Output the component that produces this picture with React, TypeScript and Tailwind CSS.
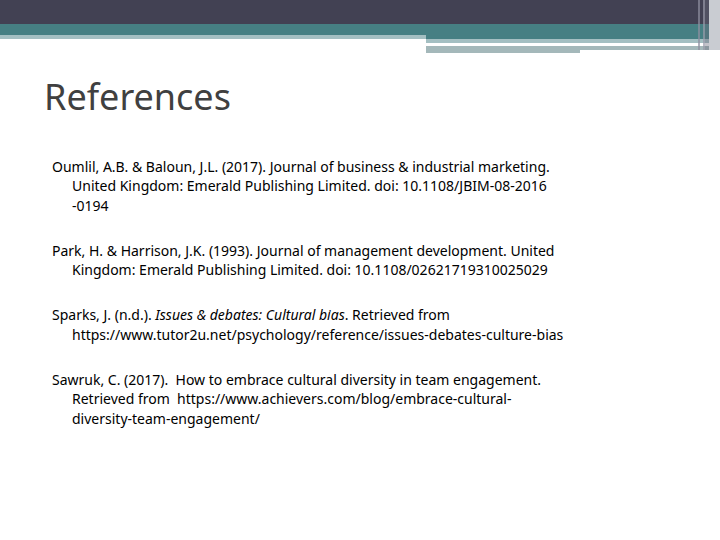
import React from 'react';

const refs: React.ReactNode[][] = [
  [
    'Oumlil, A.B. & Baloun, J.L. (2017). Journal of business & industrial marketing.',
    'United Kingdom: Emerald Publishing Limited. doi: 10.1108/JBIM-08-2016',
    '-0194',
  ],
  [
    'Park, H. & Harrison, J.K. (1993). Journal of management development. United',
    'Kingdom: Emerald Publishing Limited. doi: 10.1108/02621719310025029',
  ],
  [
    <>Sparks, J. (n.d.). <i>Issues &amp; debates: Cultural bias</i>. Retrieved from</>,
    'https://www.tutor2u.net/psychology/reference/issues-debates-culture-bias',
  ],
  [
    'Sawruk, C. (2017).  How to embrace cultural diversity in team engagement.',
    'Retrieved from  https://www.achievers.com/blog/embrace-cultural-',
    'diversity-team-engagement/',
  ],
];

const App: React.FC = () => {
  return (
    <div className="w-[720px] h-[540px] bg-white overflow-hidden flex flex-col">
      <div className="relative h-[50px]">
        <div className="h-[24px] bg-[#424153]" />
        <div className="flex">
          <div className="w-[426px]">
            <div className="h-[11px] bg-[#467f83]" />
            <div className="h-[4px] bg-[#a4bfc2]" />
          </div>
          <div className="flex-1">
            <div className="h-[15px] bg-[#467f83]" />
            <div className="h-[4px] bg-[#a4bfc2]" />
            <div className="h-[3px] bg-white" />
            <div className="flex">
              <div className="w-[154px] h-[7px] bg-[#a4b8ba]" />
              <div className="flex-1 h-[4px] bg-[#a4b8ba]" />
            </div>
          </div>
        </div>
        <div className="absolute top-0 right-0 h-[50px] w-[22px] flex">
          <div className="w-[2px] bg-[#8e8ea0] opacity-70" />
          <div className="w-[3px]" />
          <div className="w-[2px] bg-[#9a9aaa] opacity-70" />
          <div className="w-[4px] bg-[#6a6a7a] opacity-40" />
          <div className="flex-1 bg-[#c9ccd2]" />
        </div>
      </div>
      <h1 className="ml-[44px] mt-[25px] text-[36px] leading-[44px] text-[#404040] [font-family:'Open_Sans',sans-serif]">
        References
      </h1>
      <div className="ml-[52px] mt-[38px] flex flex-col gap-[26px] [font-family:'DejaVu_Serif',serif] text-[14px] leading-[19.3px] text-black">
        {refs.map((lines, i) => (
          <div key={i}>
            {lines.map((l, j) => (
              <div key={j} className={j === 0 ? 'whitespace-pre' : 'whitespace-pre pl-[20px]'}>
                {l}
              </div>
            ))}
          </div>
        ))}
      </div>
    </div>
  );
};

export default App;
